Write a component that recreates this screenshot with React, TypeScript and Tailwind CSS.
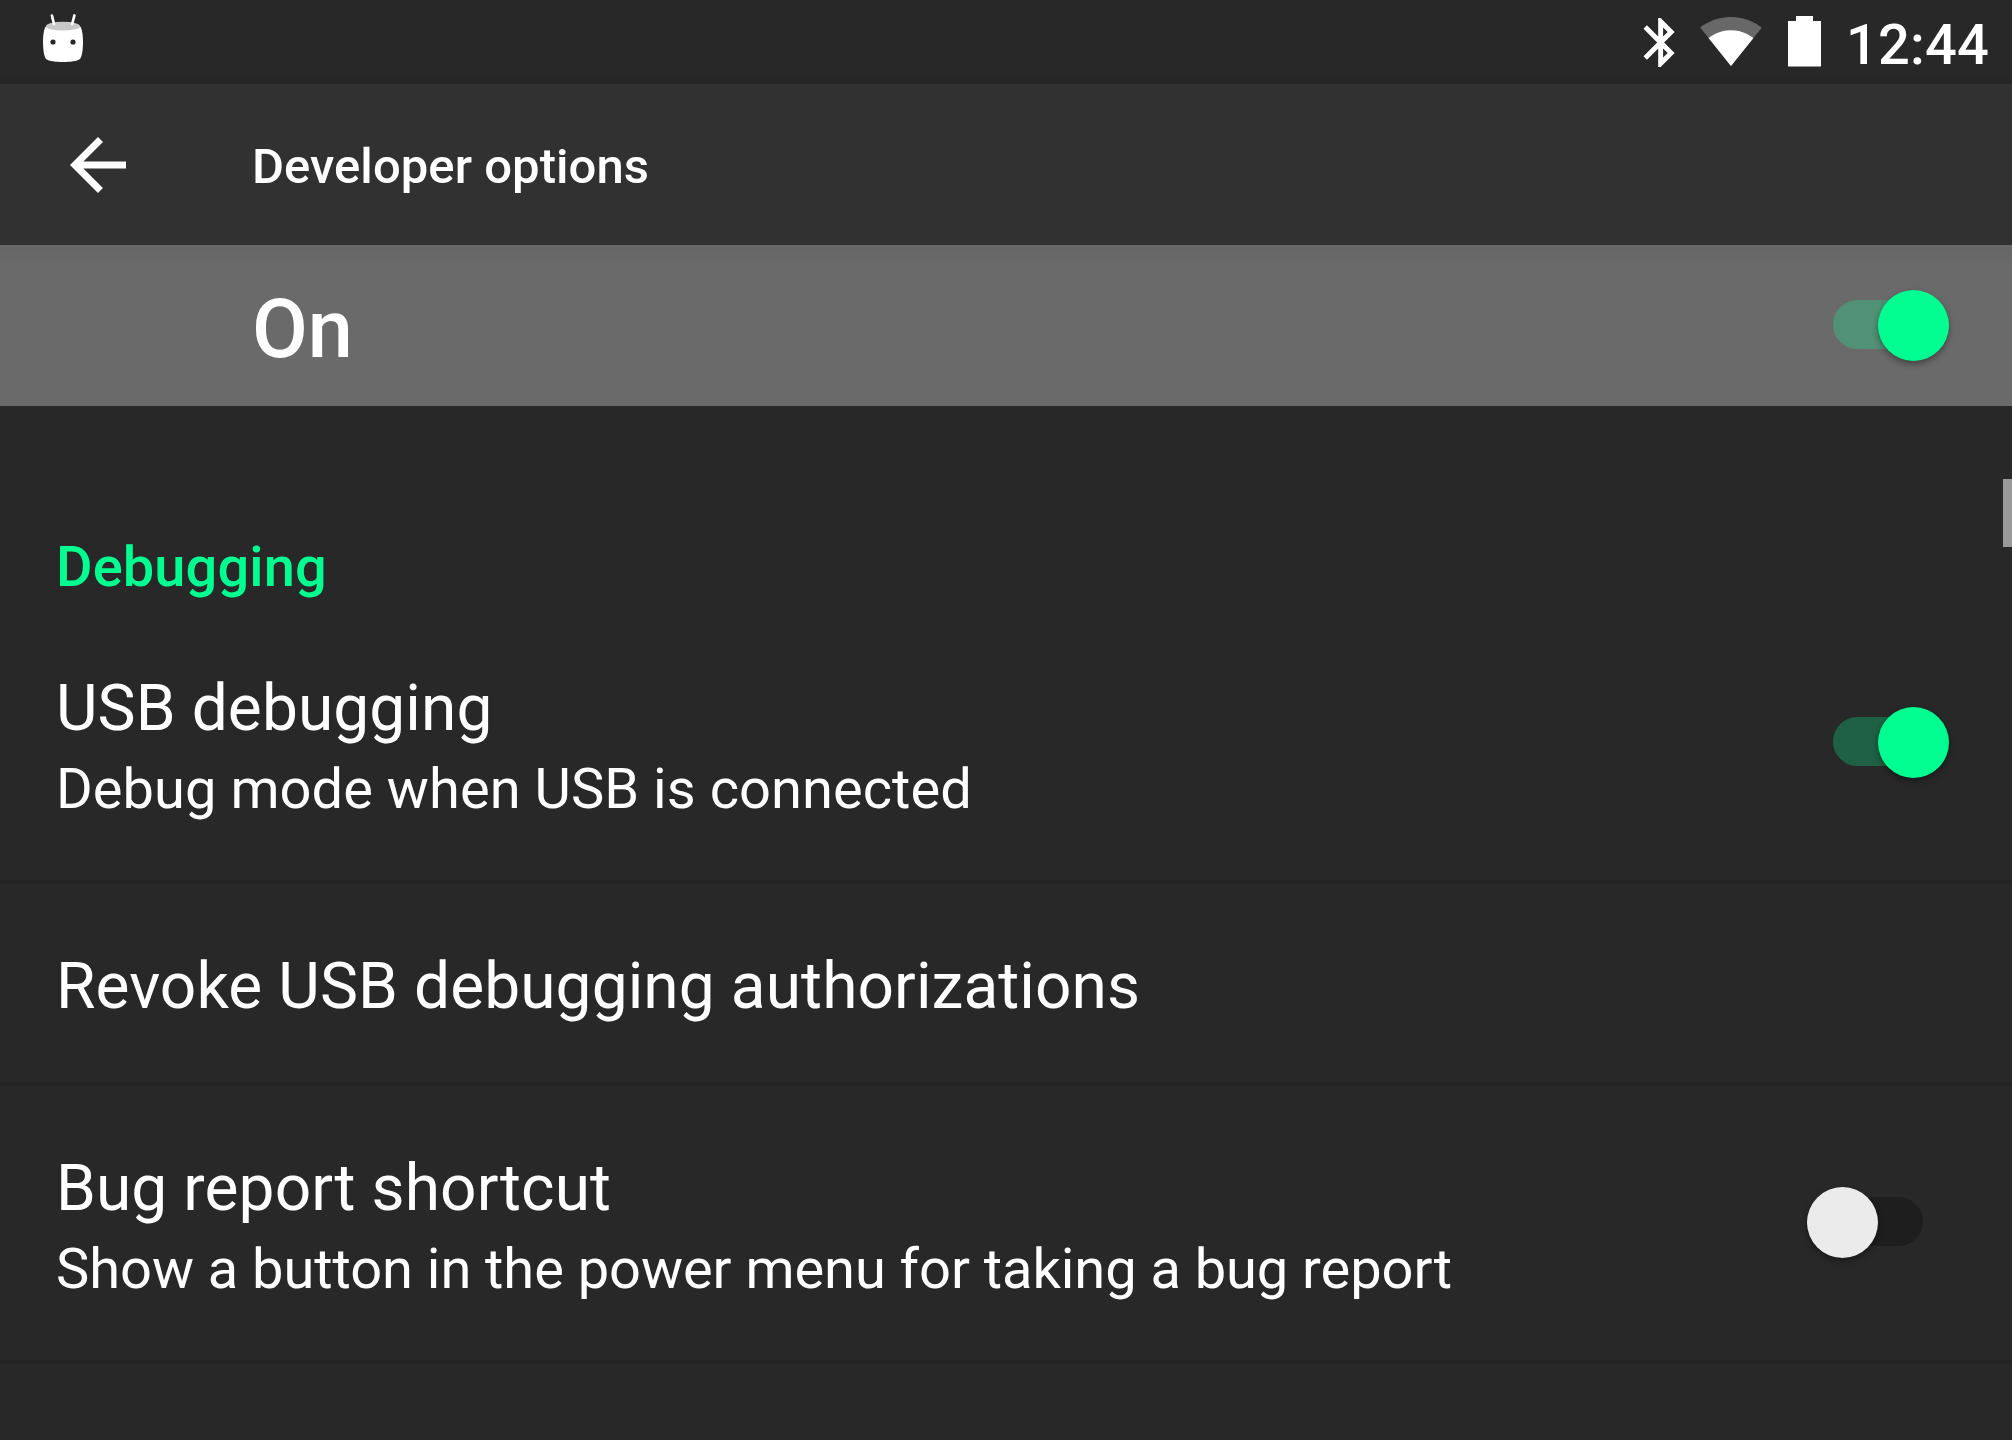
import React from "react";

function Switch({ on, dim }: { on: boolean; dim?: boolean }) {
  return (
    <div className={`relative flex h-[71px] w-[116px] shrink-0 items-start ${on ? "justify-end" : "mr-[26px] justify-start"}`}>
      <div
        className={`absolute top-[10px] h-[49px] w-[106px] rounded-full ${
          on ? (dim ? "left-0 bg-[#1e6144]" : "left-0 bg-[#519176]") : "right-0 bg-[#1e1e1e]"
        }`}
      />
      <div
        className={`relative size-[71px] rounded-full shadow-[0_3px_6px_rgba(0,0,0,0.38)] ${
          on ? "bg-[#00ff90]" : "bg-[#ebebeb]"
        }`}
      />
    </div>
  );
}

type RowProps = { title: string; summary?: string; summaryClass?: string; on?: boolean };

function Row({ title, summary, summaryClass = "", on }: RowProps) {
  return (
    <div className="flex items-start justify-between border-b-4 border-[#232323] pr-[63px] pl-14">
      <div className={`pt-[61px] ${summary ? "pb-[52px]" : "pb-[54px]"}`}>
        <div className="text-[64px] leading-[83px] tracking-[0.1px]">{title}</div>
        {summary && <div className={`text-[56px] leading-[78px] ${summaryClass}`}>{summary}</div>}
      </div>
      {on !== undefined && (
        <div className="pt-[101px]">
          <Switch on={on} dim />
        </div>
      )}
    </div>
  );
}

function StatusBar() {
  return (
    <div className="flex h-[84px] items-start bg-linear-to-b from-[#282828] from-88% to-[#252525] pr-[23px] pl-[42px]">
      <svg className="mt-[13px]" width="42" height="50" viewBox="42 13 42 50">
        <path d="M45.2 27C49 24.500 77 24.500 80.800 27C82.400 31 83 36 83 42C83 50 82 56 80 59C77 61.300 70 62 63 62C56 62 49 61.300 46 59C44 56 43 50 43 42C43 36 43.600 31 45.200 27Z" fill="#fff" />
        <ellipse cx="63" cy="26.2" rx="17" ry="4.400" fill="#c8c8c8" />
        <path d="M51.900 15.500L54 24M74.400 15.500L72.200 24" stroke="#fff" strokeWidth="2.700" strokeLinecap="round" />
        <circle cx="53" cy="42" r="2.600" fill="#282828" />
        <circle cx="73" cy="42" r="2.600" fill="#282828" />
      </svg>
      <svg className="mt-[18px] ml-auto" width="32" height="49" viewBox="4.8 2 13.06 20" fill="#fff">
        <path d="M17.71 7.71L12 2h-1v7.59L6.41 5 5 6.41 10.59 12 5 17.59 6.41 19 11 14.41V22h1l5.71-5.71-4.3-4.29 4.3-4.29zM13 5.83l1.88 1.88L13 9.59V5.83zm1.88 10.46L13 18.17v-3.76l1.88 1.88z" />
      </svg>
      <svg className="mt-[17px] ml-[25px]" width="62" height="49" viewBox="0.36 3 23.28 18.5" fill="#fff">
        <path fillOpacity=".3" d="M12.01 21.49L23.64 7c-.45-.34-4.93-4-11.64-4C5.28 3 .81 6.66.36 7l11.63 14.49.01.01.01-.01z" />
        <path d="M3.53 10.95l8.46 10.54.01.01.01-.01 8.46-10.54C20.04 10.62 16.81 8 12 8c-4.81 0-8.04 2.62-8.47 2.95z" />
      </svg>
      <svg className="mt-4 ml-[26px]" width="33" height="51" viewBox="0 0 33 51" fill="#fff">
        <path d="M8 0H25V5H33V50.500H0V5H8Z" />
      </svg>
      <div className="mt-[9px] ml-[25px] text-[56px] leading-[72px] font-medium tracking-[0.2px]">12:44</div>
    </div>
  );
}

export default function App() {
  return (
    <div className="relative h-[1440px] w-[2012px] overflow-hidden bg-[#282828] font-['Roboto',sans-serif] text-white">
      <StatusBar />
      <header className="flex h-[161px] items-center bg-[#313131] pl-[70px]">
        <svg width="56" height="56" viewBox="4 4 16 16" fill="#fff">
          <path d="M20 11H7.83l5.59-5.59L12 4l-8 8 8 8 1.41-1.41L7.83 13H20v-2z" />
        </svg>
        <h1 className="mt-[5px] ml-[126px] text-[49px] leading-[60px] font-medium tracking-[0.05px]">Developer options</h1>
      </header>
      <div className="flex h-[161px] items-center justify-between bg-linear-to-b from-[#666666] to-[#6a6a6a] to-10% pr-[63px] pl-[252px]">
        <div className="mt-[9px] text-[81px] leading-[100px] font-medium">On</div>
        <Switch on />
      </div>
      <h2 className="flex h-[200px] items-end pb-[3px] pl-14 text-[56px] leading-[72px] font-medium tracking-[0.1px] text-[#00ff90]">
        Debugging
      </h2>
      <Row
        title="USB debugging"
        summary="Debug mode when USB is connected"
        summaryClass="tracking-[0.05px]"
        on
      />
      <Row title="Revoke USB debugging authorizations" />
      <Row
        title="Bug report shortcut"
        summary="Show a button in the power menu for taking a bug report"
        summaryClass="tracking-[-0.05px]"
        on={false}
      />
      <div className="absolute top-[479px] right-0 h-[68px] w-[9px] bg-[#999999]" />
    </div>
  );
}
